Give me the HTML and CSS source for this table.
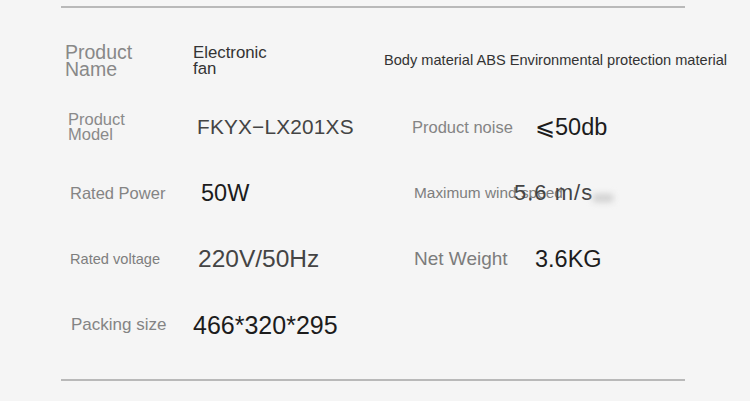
FILE: index.html
```html
<!DOCTYPE html>
<html>
<head>
<meta charset="utf-8">
<link rel="stylesheet" href="styles.css">
</head>
<body>
<div class="sheet">
  <div class="row">
    <div class="c1"><span class="lbl lbl-big">Product<br>Name</span></div>
    <div class="c2"><span class="val-small">Electronic<br>fan</span></div>
    <div class="c34"><span class="body-mat">Body material ABS Environmental protection material</span></div>
  </div>
  <div class="row">
    <div class="c1 p3"><span class="lbl lbl-two">Product<br>Model</span></div>
    <div class="c2 p4"><span class="val val-model">FKYX−LX201XS</span></div>
    <div class="c3 p28"><span class="lbl lbl-md">Product noise</span></div>
    <div class="c4 p21"><span class="val val-dark">⩽50db</span></div>
  </div>
  <div class="row">
    <div class="c1 p5"><span class="lbl lbl-md">Rated Power</span></div>
    <div class="c2 p8"><span class="val val-dark">50W</span></div>
    <div class="c3 p30"><span class="lbl lbl-wind">Maximum wind speed</span></div>
    <div class="c4 over"><span class="val val-wind">5.6 m/s</span><span class="smudge"></span></div>
  </div>
  <div class="row">
    <div class="c1 p5"><span class="lbl lbl-sm">Rated voltage</span></div>
    <div class="c2 p5"><span class="val val-volt">220V/50Hz</span></div>
    <div class="c3 p30"><span class="lbl lbl-lg">Net Weight</span></div>
    <div class="c4 p21"><span class="val val-dark">3.6KG</span></div>
  </div>
  <div class="row">
    <div class="c1 p6"><span class="lbl lbl-pack">Packing size</span></div>
    <div class="c2"><span class="val val-pack">466*320*295</span></div>
  </div>
</div>
</body>
</html>
```

FILE: styles.css
```css
html, body {
  margin: 0;
  padding: 0;
  background: #f5f5f5;
}
body {
  font-family: "Liberation Sans", Arial, sans-serif;
  width: 750px;
  height: 401px;
  overflow: hidden;
}
.sheet {
  margin: 6px 0 0 61px;
  width: 624px;
  border-top: 2px solid #b9b9b9;
  border-bottom: 2px solid #b9b9b9;
  padding: 20px 0 21px;
}
.row {
  display: grid;
  grid-template-columns: 132px 191px 130px 1fr;
  height: 66px;
  align-items: center;
}
.c1 { padding-left: 4px; }
.c34 { grid-column: 3 / 5; }
.over { display: flex; align-items: center; }
.p3 { padding-left: 7px; }
.p5 { padding-left: 9px; }
.p6 { padding-left: 10px; }
.p21 { padding-left: 21px; }
.p28 { padding-left: 28px; }
.p30 { padding-left: 30px; }
.c2.p4 { padding-left: 4px; }
.c2.p5 { padding-left: 5px; }
.c2.p8 { padding-left: 8px; }

.lbl { color: #8a8a8a; display: block; white-space: nowrap; }
.lbl-big { font-size: 19.5px; line-height: 17px; color: #888; }
.lbl-two { font-size: 16.5px; line-height: 15px; }
.lbl-md { font-size: 16.5px; color: #848484; }
.lbl-pack { font-size: 17px; color: #848484; }
.lbl-sm { font-size: 14.6px; color: #7e7e7e; }
.lbl-wind { font-size: 15.4px; color: #7e7e7e; }
.lbl-lg { font-size: 19px; color: #7c7c7c; }

.val-small { display: block; font-size: 16.8px; line-height: 16px; color: #333; }
.body-mat { font-size: 14.6px; color: #333; display: block; margin-top: -2px; white-space: nowrap; }

.val { display: block; white-space: nowrap; }
.val-model { font-size: 20.8px; color: #444; letter-spacing: 0.2px; }
.val-dark { font-size: 23.5px; color: #1c1c1c; }
.val-wind { font-size: 22px; color: #444; letter-spacing: 1px; }
.val-volt { font-size: 24.5px; color: #444; }
.val-pack { font-size: 25px; color: #1c1c1c; }
.smudge {
  display: block;
  width: 20px;
  height: 8px;
  margin: 10px 0 0 0;
  background: #cfcfcf;
  filter: blur(3px);
}
```
